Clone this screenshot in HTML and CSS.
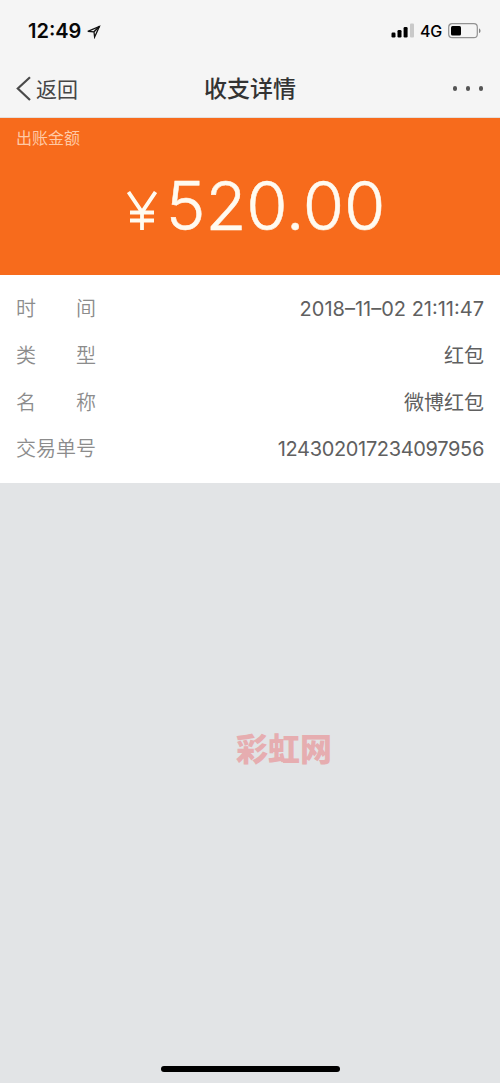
FILE: index.html
```html
<!DOCTYPE html>
<html lang="zh-CN">
<head>
<meta charset="utf-8">
<title>收支详情</title>
<link rel="stylesheet" href="styles.css">
</head>
<body>
<div class="screen">
  <div class="status">
    <span class="clock">12:49</span>
    <svg class="location" width="14" height="14" viewBox="0 0 14 14"><path d="M.8 6.4 12.4 1.4 7.6 12 7 6.8Z" fill="none" stroke="#111" stroke-width="1.3"/><path d="M7 6.8 12.4 1.4" stroke="#111" stroke-width="1.5"/></svg>
    <svg class="signal" width="24" height="16" viewBox="0 0 24 16"><rect x="0.5" y="9.5" width="4" height="5" rx="1.2"/><rect x="6.5" y="7" width="4" height="7.5" rx="1.2"/><rect x="12.6" y="4" width="4" height="10.5" rx="1.2"/><rect x="19" y="0.5" width="4" height="14" rx="1" fill="#c9c9c9"/></svg>
    <span class="network">4G</span>
    <svg class="battery" width="34" height="16" viewBox="0 0 34 16"><rect x=".7" y=".7" width="28.6" height="14" rx="3.5" fill="none" stroke="#929292" stroke-width="1.2"/><rect x="3" y="3" width="10" height="9.6" rx="1.5"/><path d="M31 5.4C33 6 33 9.4 31 10Z" fill="#858585"/></svg>
  </div>
  <div class="nav">
    <div class="back">
      <svg width="16" height="26" viewBox="0 0 16 26"><path d="M15 1.2 2.8 12.5 15 24" fill="none" stroke="#4a4a4a" stroke-width="2.2"/></svg>
      <span class="back-text">返回</span>
    </div>
    <h1 class="title">收支详情</h1>
    <div class="more"><i class="dot"></i><i class="dot"></i><i class="dot"></i></div>
  </div>
  <div class="hero">
    <div class="hero-label">出账金额</div>
    <div class="amount">
      <svg class="yen" width="30" height="40" viewBox="0 0 30 40"><path d="M1.5 1 15 21 28.5 1M15 21V39M3 21.5H27M3 29.5H27" fill="none" stroke="#fffaf0" stroke-width="3.8"/></svg>
      <span class="digits">520.00</span>
    </div>
  </div>
  <div class="details">
    <div class="row"><div class="label"><span>时</span><span>间</span></div><div class="value">2018–11–02 21:11:47</div></div>
    <div class="row"><div class="label"><span>类</span><span>型</span></div><div class="value">红包</div></div>
    <div class="row"><div class="label"><span>名</span><span>称</span></div><div class="value">微博红包</div></div>
    <div class="row"><div class="label">交易单号</div><div class="value order">124302017234097956</div></div>
  </div>
  <div class="rest">
    <div class="watermark">彩虹网</div>
    <div class="home-bar"></div>
  </div>
</div>
</body>
</html>
```
FILE: styles.css
```css
* { box-sizing: border-box; }
body { margin: 0; font-family: Inter, "Noto Sans CJK SC", sans-serif; }
.screen { display: flex; flex-direction: column; width: 500px; height: 1083px; background: #e2e4e6; overflow: hidden; }
.status { display: flex; align-items: center; height: 60px; padding: 2px 18px 0 28px; background: #f5f5f5; }
.clock { font-size: 20px; font-weight: 600; line-height: 24px; color: #080808; }
.location { margin: 1px 0 0 6px; }
.signal { margin-left: auto; }
.network { margin: 0 6px 0 5px; font-size: 16px; font-weight: 500; line-height: 20px; letter-spacing: -.2px; }
.nav { display: grid; grid-template-columns: 1fr auto 1fr; align-items: center; height: 58px; padding: 0 17px 0 15px; background: #f5f5f5; border-bottom: 1px solid #e3dfdd; }
.back { display: flex; align-items: center; gap: 5px; font-size: 21px; line-height: 30px; color: #454545; }
.back-text { padding-top: 2px; }
.title { margin: 0; padding-left: 2px; font-size: 23px; font-weight: 500; line-height: 34px; color: #333; }
.more { display: flex; justify-content: flex-end; gap: 8.3px; }
.dot { width: 4.5px; height: 4.5px; border-radius: 50%; background: #555; }
.hero { height: 157px; padding: 8px 16px 0; background: #f76b1c; }
.hero-label { font-size: 16px; line-height: 24px; color: #ffc9a5; }
.amount { display: flex; align-items: flex-end; justify-content: center; gap: 9px; height: 98px; padding-left: 12px; color: #fffaf0; }
.yen { margin-bottom: 17px; }
.digits { font-size: 67px; font-weight: 300; line-height: 84px; letter-spacing: -.2px; -webkit-text-stroke: .5px #fffaf0; }
.details { height: 208px; padding-top: 11px; background: #fff; }
.row { display: flex; justify-content: space-between; align-items: center; height: 46.7px; padding: 0 16px; font-size: 20px; line-height: 30px; }
.label { display: flex; justify-content: space-between; width: 80px; color: #8c8c8c; font-weight: 350; }
.value { color: #606060; font-weight: 400; }
.order { letter-spacing: -.34px; }
.rest { display: flex; flex: 1; flex-direction: column; align-items: center; justify-content: space-between; padding: 244px 0 11px; }
.watermark { margin-left: 68px; font-size: 32px; font-weight: 900; line-height: 46px; color: #e6adb0; }
.home-bar { width: 179px; height: 6px; border-radius: 3px; background: #000; }
```
